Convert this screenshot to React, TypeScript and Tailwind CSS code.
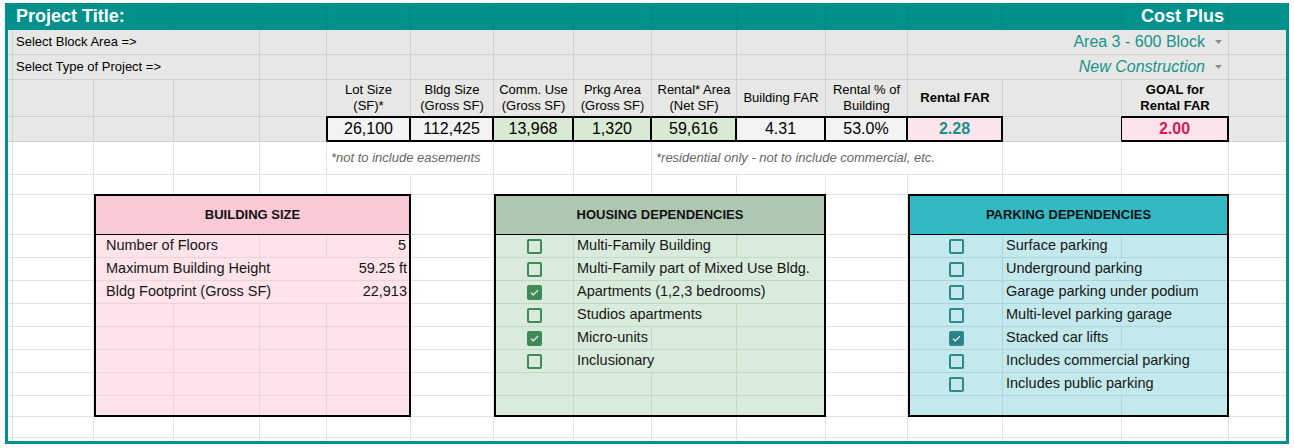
import React from "react";

// Sheet geometry (px, each width includes the cell's right gridline):
// c1 5 | A 81 | B 80 | C 86 | D 67 | E 84 | F 83 | G 80 | H 78 | I 85 | J 89 | K 82 | L 95 | M 119 | N 107 | O 57

const GRAY_ROW = "bg-[#e7e8e5]";
const GRAY_LINE = "border-[#d1d2cf]";
const WHITE_LINE = "border-[#e2e2e2]";

function TitleBar() {
  const mid = [
    "w-[86px]",
    "w-[67px]",
    "w-[84px]",
    "w-[83px]",
    "w-[80px]",
    "w-[78px]",
    "w-[85px]",
    "w-[89px]",
    "w-[82px]",
    "w-[95px]",
    "w-[119px]",
  ];
  return (
    <div className="flex h-[27px] bg-[#00918c] text-[18px] font-bold text-white">
      <div className="w-[5px] shrink-0" />
      <div className="flex w-[161px] shrink-0 items-center whitespace-nowrap border-r border-[#0a8681] pl-[3px]">
        Project Title:
      </div>
      {mid.map((w, i) => (
        <div key={i} className={`${w} shrink-0 border-r border-[#0a8681]`} />
      ))}
      <div className="flex w-[107px] shrink-0 items-center justify-end whitespace-nowrap border-r border-[#0a8681] pr-[4px]">
        Cost Plus
      </div>
      <div className="w-[57px] shrink-0" />
    </div>
  );
}

function SelectRow({ label, value, italic }: { label: string; value: string; italic?: boolean }) {
  const mid = ["w-[67px]", "w-[84px]", "w-[83px]", "w-[80px]", "w-[78px]", "w-[85px]", "w-[89px]", "w-[82px]"];
  return (
    <div className={`flex h-[25px] border-b ${GRAY_LINE} ${GRAY_ROW} text-[13px]`}>
      <div className={`w-[5px] shrink-0 border-r ${GRAY_LINE}`} />
      <div className={`flex w-[247px] shrink-0 items-center whitespace-nowrap border-r ${GRAY_LINE} pl-[3px]`}>
        {label}
      </div>
      {mid.map((w, i) => (
        <div key={i} className={`${w} shrink-0 border-r ${GRAY_LINE}`} />
      ))}
      <div
        className={`flex w-[321px] shrink-0 items-center justify-end border-r ${GRAY_LINE} pr-[6px] text-[16px] text-[#17938e]`}
      >
        <span className={italic ? "italic" : ""}>{value}</span>
        <svg width="7" height="4" viewBox="0 0 7 4" className="ml-[10px]">
          <path d="M0 0h7L3.5 4z" fill="#8b8f8b" />
        </svg>
      </div>
      <div className="w-[57px] shrink-0" />
    </div>
  );
}

const HEADERS: { w: string; lines: string[]; bold?: boolean }[] = [
  { w: "w-[84px]", lines: ["Lot Size", "(SF)*"] },
  { w: "w-[83px]", lines: ["Bldg Size", "(Gross SF)"] },
  { w: "w-[80px]", lines: ["Comm. Use", "(Gross SF)"] },
  { w: "w-[78px]", lines: ["Prkg Area", "(Gross SF)"] },
  { w: "w-[85px]", lines: ["Rental* Area", "(Net SF)"] },
  { w: "w-[89px]", lines: ["Building FAR"] },
  { w: "w-[82px]", lines: ["Rental % of", "Building"] },
  { w: "w-[95px]", lines: ["Rental FAR"], bold: true },
  { w: "w-[119px]", lines: [] },
  { w: "w-[107px]", lines: ["GOAL for", "Rental FAR"], bold: true },
];

function HeaderRow() {
  const lead = ["w-[5px]", "w-[81px]", "w-[80px]", "w-[86px]", "w-[67px]"];
  return (
    <div className={`flex h-[36px] ${GRAY_ROW} text-[13px] leading-[16px]`}>
      {lead.map((w, i) => (
        <div key={i} className={`${w} shrink-0 border-r ${GRAY_LINE}`} />
      ))}
      {HEADERS.map((h, i) => (
        <div
          key={i}
          className={`${h.w} flex shrink-0 flex-col items-center justify-center whitespace-nowrap border-r ${GRAY_LINE} text-center ${
            h.bold ? "font-bold" : ""
          }`}
        >
          {h.lines.map((l) => (
            <span key={l}>{l}</span>
          ))}
        </div>
      ))}
      <div className="w-[57px] shrink-0" />
    </div>
  );
}

function ValueRow() {
  const plain = `shrink-0 border-y border-r ${GRAY_LINE}`;
  const box = "flex shrink-0 items-center justify-center border-y-2 border-r-2 border-black";
  return (
    <div className={`flex h-[26px] ${GRAY_ROW} text-[16px]`}>
      <div className={`w-[5px] ${plain}`} />
      <div className={`w-[81px] ${plain}`} />
      <div className={`w-[80px] ${plain}`} />
      <div className={`w-[86px] ${plain}`} />
      <div className={`w-[67px] shrink-0 border-y ${GRAY_LINE} border-r border-r-black`} />
      <div className={`w-[84px] ${box} border-l border-l-black bg-[#f3f3f3]`}>26,100</div>
      <div className={`w-[83px] ${box} bg-[#f3f3f3]`}>112,425</div>
      <div className={`w-[80px] ${box} bg-[#d9ead3]`}>13,968</div>
      <div className={`w-[78px] ${box} bg-[#d9ead3]`}>1,320</div>
      <div className={`w-[85px] ${box} bg-[#d9ead3]`}>59,616</div>
      <div className={`w-[89px] ${box} bg-[#f3f3f3]`}>4.31</div>
      <div className={`w-[82px] ${box} bg-[#f3f3f3]`}>53.0%</div>
      <div className={`w-[95px] ${box} bg-[#fce4ec] font-bold text-[#17918c]`}>2.28</div>
      <div className={`w-[119px] shrink-0 border-y ${GRAY_LINE} border-r border-r-black`} />
      <div className={`w-[107px] ${box} bg-[#fce4ec] font-bold text-[#d31a5b]`}>2.00</div>
      <div className={`w-[57px] shrink-0 border-y ${GRAY_LINE}`} />
    </div>
  );
}

function NotesRow() {
  const cell = `shrink-0 border-r ${WHITE_LINE}`;
  const note = `flex shrink-0 items-center whitespace-nowrap border-r ${WHITE_LINE} pl-[4px] italic text-[#666666]`;
  return (
    <div className={`flex h-[33px] border-b ${WHITE_LINE} bg-white text-[13px]`}>
      <div className={`w-[5px] ${cell}`} />
      <div className={`w-[81px] ${cell}`} />
      <div className={`w-[80px] ${cell}`} />
      <div className={`w-[86px] ${cell}`} />
      <div className={`w-[67px] ${cell}`} />
      <div className={`w-[167px] ${note}`}>*not to include easements</div>
      <div className={`w-[80px] ${cell}`} />
      <div className={`w-[78px] ${cell}`} />
      <div className={`w-[351px] ${note}`}>*residential only - not to include commercial, etc.</div>
      <div className={`w-[119px] ${cell}`} />
      <div className={`w-[107px] ${cell}`} />
      <div className="w-[57px] shrink-0" />
    </div>
  );
}

const LOWER_ROWS = [
  "h-[20px]",
  "h-[40px]",
  "h-[23px]",
  "h-[23px]",
  "h-[23px]",
  "h-[23px]",
  "h-[23px]",
  "h-[23px]",
  "h-[23px]",
  "h-[21px]",
  "h-[21px]",
  "h-[3px]",
];

function PlainColumn({ w, last }: { w: string; last?: boolean }) {
  return (
    <div className={`${w} flex shrink-0 flex-col ${last ? "" : `border-r ${WHITE_LINE}`}`}>
      {LOWER_ROWS.map((h, i) => (
        <div key={i} className={`${h} shrink-0 ${i < LOWER_ROWS.length - 1 ? `border-b ${WHITE_LINE}` : ""}`} />
      ))}
    </div>
  );
}

function Strip({ cols, h, line }: { cols: string[]; h: string; line?: boolean }) {
  return (
    <div className={`flex ${h} shrink-0 ${line ? `border-b ${WHITE_LINE}` : ""}`}>
      {cols.map((w, i) => (
        <div key={i} className={`${w} shrink-0 border-r ${WHITE_LINE}`} />
      ))}
    </div>
  );
}

function BoxGroup({ cols, children }: { cols: string[]; children: React.ReactNode }) {
  return (
    <div className="flex shrink-0 flex-col">
      <Strip cols={cols} h="h-[19px]" />
      {children}
      <Strip cols={cols} h="h-[21px]" line />
      <Strip cols={cols} h="h-[3px]" />
    </div>
  );
}

function Box({ title, head, body, children }: { title: string; head: string; body: string; children: React.ReactNode }) {
  return (
    <div className={`flex h-[223px] flex-col border-2 border-black ${body} text-[14.5px] text-[#161616]`}>
      <div className={`flex h-[39px] shrink-0 items-center justify-center border-b border-black ${head} text-[13px] font-bold text-[#111111]`}>
        {title}
      </div>
      {children}
    </div>
  );
}

function Tick({ on, tone }: { on: boolean; tone: "green" | "teal" }) {
  const ring = tone === "green" ? "border-[#3f8a58]" : "border-[#2c898c]";
  const fill = on ? (tone === "green" ? "bg-[#3f8a58]" : "bg-[#2a8085]") : "";
  return (
    <span className={`flex h-[15px] w-[15px] items-center justify-center rounded-[2px] border-2 ${ring} ${fill}`}>
      {on && (
        <svg width="11" height="11" viewBox="0 0 11 11">
          <path d="M2 5.6l2.3 2.3L9 3.2" fill="none" stroke="#ffffff" strokeWidth="1.2" />
        </svg>
      )}
    </span>
  );
}

const PINK_LINE = "border-[#ebd3da]";
const GREEN_LINE = "border-[#c2d7c4]";
const CYAN_LINE = "border-[#a9d6da]";

function BuildingBox() {
  const empty = ["h-[23px]", "h-[23px]", "h-[23px]", "h-[23px]", "h-[19px]"];
  return (
    <Box title="BUILDING SIZE" head="bg-[#f9c9d6]" body="bg-[#fde4eb]">
      <div className={`flex h-[23px] shrink-0 border-b ${PINK_LINE}`}>
        <div className={`flex w-[164px] shrink-0 items-center border-r ${PINK_LINE} pl-[10px]`}>Number of Floors</div>
        <div className={`w-[67px] shrink-0 border-r ${PINK_LINE}`} />
        <div className="flex flex-1 items-center justify-end pr-[3px]">5</div>
      </div>
      <div className={`flex h-[23px] shrink-0 items-center justify-between border-b ${PINK_LINE} pl-[10px] pr-[2px]`}>
        <span>Maximum Building Height</span>
        <span>59.25 ft</span>
      </div>
      <div className={`flex h-[23px] shrink-0 items-center justify-between border-b ${PINK_LINE} pl-[10px] pr-[2px]`}>
        <span>Bldg Footprint (Gross SF)</span>
        <span>22,913</span>
      </div>
      {empty.map((h, i) => (
        <div key={i} className={`flex ${h} shrink-0 ${i < empty.length - 1 ? `border-b ${PINK_LINE}` : ""}`}>
          <div className={`w-[78px] shrink-0 border-r ${PINK_LINE}`} />
          <div className={`w-[86px] shrink-0 border-r ${PINK_LINE}`} />
          <div className={`w-[67px] shrink-0 border-r ${PINK_LINE}`} />
          <div className="flex-1" />
        </div>
      ))}
    </Box>
  );
}

type Item = { label: string; on: boolean; span: number };

const HOUSING: Item[] = [
  { label: "Multi-Family Building", on: false, span: 2 },
  { label: "Multi-Family part of Mixed Use Bldg.", on: false, span: 3 },
  { label: "Apartments (1,2,3 bedrooms)", on: true, span: 3 },
  { label: "Studios apartments", on: false, span: 2 },
  { label: "Micro-units", on: true, span: 1 },
  { label: "Inclusionary", on: false, span: 2 },
];

const PARKING: Item[] = [
  { label: "Surface parking", on: false, span: 1 },
  { label: "Underground parking", on: false, span: 2 },
  { label: "Garage parking under podium", on: false, span: 2 },
  { label: "Multi-level parking garage", on: false, span: 2 },
  { label: "Stacked car lifts", on: true, span: 1 },
  { label: "Includes commercial parking", on: false, span: 2 },
  { label: "Includes public parking", on: false, span: 2 },
];

// text cell width for a label spilling over n cells, then the cells left over
const HOUSING_SPAN: Record<number, string> = { 1: "w-[78px]", 2: "w-[163px]", 3: "w-[250px]" };
const HOUSING_TAIL: Record<number, string[]> = { 1: ["w-[85px]", "w-[87px]"], 2: ["w-[87px]"], 3: [] };
const PARKING_SPAN: Record<number, string> = { 1: "w-[119px]", 2: "w-[224px]" };
const PARKING_TAIL: Record<number, string[]> = { 1: ["w-[105px]"], 2: [] };

function CheckRows({
  items,
  rows,
  boxW,
  spanW,
  tail,
  line,
  tone,
}: {
  items: Item[];
  rows: string[];
  boxW: string;
  spanW: Record<number, string>;
  tail: Record<number, string[]>;
  line: string;
  tone: "green" | "teal";
}) {
  return (
    <>
      {rows.map((h, i) => {
        const it = items[i];
        const span = it ? it.span : 1;
        return (
          <div key={i} className={`flex ${h} shrink-0 ${i < rows.length - 1 ? `border-b ${line}` : ""}`}>
            <div className={`flex ${boxW} shrink-0 items-center justify-center border-r ${line}`}>
              {it && <Tick on={it.on} tone={tone} />}
            </div>
            <div className={`flex ${spanW[span]} shrink-0 items-center whitespace-nowrap border-r ${line} pl-[3px] last:border-r-0`}>
              {it?.label}
            </div>
            {tail[span].map((w, j) => (
              <div key={j} className={`${w} shrink-0 border-r ${line} last:border-r-0`} />
            ))}
          </div>
        );
      })}
    </>
  );
}

function LowerSection() {
  return (
    <div className="flex h-[266px]">
      <PlainColumn w="w-[5px]" />
      <PlainColumn w="w-[81px]" />
      <BoxGroup cols={["w-[80px]", "w-[86px]", "w-[67px]", "w-[84px]"]}>
        <BuildingBox />
      </BoxGroup>
      <PlainColumn w="w-[83px]" />
      <BoxGroup cols={["w-[80px]", "w-[78px]", "w-[85px]", "w-[89px]"]}>
        <Box title="HOUSING DEPENDENCIES" head="bg-[#afc7b1]" body="bg-[#d9ebdb]">
          <CheckRows
            items={HOUSING}
            rows={["h-[23px]", "h-[23px]", "h-[23px]", "h-[23px]", "h-[23px]", "h-[23px]", "h-[23px]", "h-[19px]"]}
            boxW="w-[78px]"
            spanW={HOUSING_SPAN}
            tail={HOUSING_TAIL}
            line={GREEN_LINE}
            tone="green"
          />
        </Box>
      </BoxGroup>
      <PlainColumn w="w-[82px]" />
      <BoxGroup cols={["w-[95px]", "w-[119px]", "w-[107px]"]}>
        <Box title="PARKING DEPENDENCIES" head="bg-[#33b9c4]" body="bg-[#c3e9ec]">
          <CheckRows
            items={PARKING}
            rows={["h-[23px]", "h-[23px]", "h-[23px]", "h-[23px]", "h-[23px]", "h-[23px]", "h-[23px]", "h-[19px]"]}
            boxW="w-[93px]"
            spanW={PARKING_SPAN}
            tail={PARKING_TAIL}
            line={CYAN_LINE}
            tone="teal"
          />
        </Box>
      </BoxGroup>
      <PlainColumn w="w-[57px]" last />
    </div>
  );
}

export default function App() {
  return (
    <div className="h-[448px] w-[1294px] overflow-hidden bg-white pl-[5px] pt-[3px] font-['Liberation_Sans',Arial,sans-serif] text-black">
      <div className="w-[1284px] border-x-[3px] border-b-[3px] border-[#00918c]">
        <TitleBar />
        <SelectRow label="Select Block Area =>" value="Area 3 - 600 Block" />
        <SelectRow label="Select Type of Project =>" value="New Construction" italic />
        <HeaderRow />
        <ValueRow />
        <NotesRow />
        <LowerSection />
      </div>
    </div>
  );
}
